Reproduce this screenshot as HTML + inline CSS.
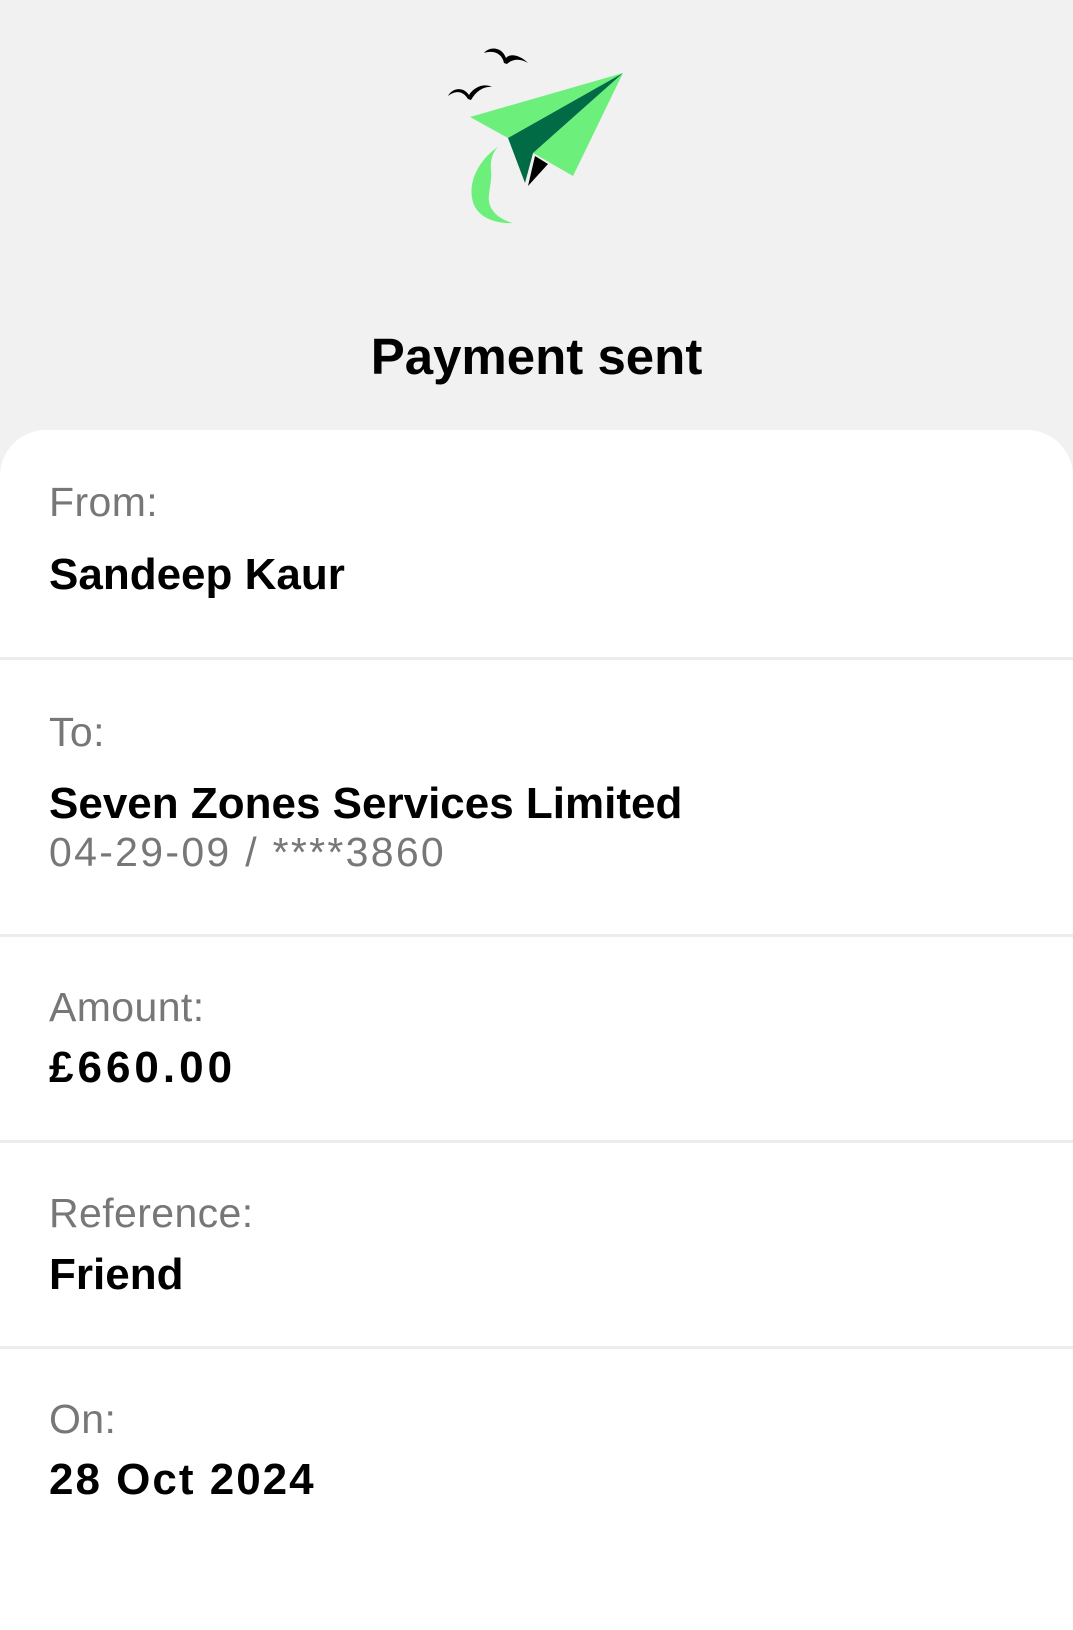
<!DOCTYPE html>
<html><head><meta charset="utf-8"><style>
body{margin:0;width:1073px;height:1600px;background:#f1f1f1;font-family:"Liberation Sans",sans-serif;position:relative;overflow:hidden}
.card{position:absolute;left:0;top:430px;width:1073px;height:1200px;background:#fff;border-radius:46px 46px 0 0}
.t{position:absolute;left:49px;line-height:1;white-space:nowrap}
.l{font-size:41px;color:#777;letter-spacing:0.4px}
.v{font-size:44px;font-weight:bold;color:#000}
.s{font-size:41px;color:#777;letter-spacing:2.3px}
.d{position:absolute;left:0;width:1073px;height:3px;background:#ececec}
</style></head><body>
<svg style="position:absolute;left:0;top:0" width="1073" height="240">
<path d="M470 117 L623 73 L508 138 Z" fill="#6cf07b"/>
<path d="M623 73 L573 176 L533 153 Z" fill="#6cf07b"/>
<path d="M623 73 L508 138 L525 183 L533 153 Z" fill="#006b45"/>
<path d="M535 156 L548 164 L528 186 Z" fill="#000"/>
<path d="M498 147 C478 160 466 185 474 205 C480 218 496 224 513 223 C497 219 487 208 489 195 C490 185 492 178 491 170 C490 160 493 152 498 147 Z" fill="#6cf07b"/>
<path d="M484 53 C490 46 502 47 506 58 C510 53 520 55 528 63 C520 58 512 59 507 64 L504 63 C502 53 493 50 484 53 Z" fill="#000"/>
<path d="M448 96 C452 88 463 86 469 95 C474 87 484 83 492 87 C484 86 476 91 471 100 L468 99 C463 91 456 90 448 96 Z" fill="#000"/>
</svg>
<div class="t v" style="left:0;width:1073px;text-align:center;font-size:51px;top:331px">Payment sent</div>
<div class="card"></div>
<div class="t l" style="top:482px">From:</div>
<div class="t v" style="top:553px">Sandeep Kaur</div>
<div class="d" style="top:657px"></div>
<div class="t l" style="top:712px">To:</div>
<div class="t v" style="top:782px">Seven Zones Services Limited</div>
<div class="t s" style="top:832px">04-29-09 / ****3860</div>
<div class="d" style="top:934px"></div>
<div class="t l" style="top:987px">Amount:</div>
<div class="t v" style="top:1046px;letter-spacing:4px">£660.00</div>
<div class="d" style="top:1140px"></div>
<div class="t l" style="top:1193px">Reference:</div>
<div class="t v" style="top:1253px">Friend</div>
<div class="d" style="top:1346px"></div>
<div class="t l" style="top:1399px">On:</div>
<div class="t v" style="top:1458px;letter-spacing:2px">28 Oct 2024</div>
</body></html>
